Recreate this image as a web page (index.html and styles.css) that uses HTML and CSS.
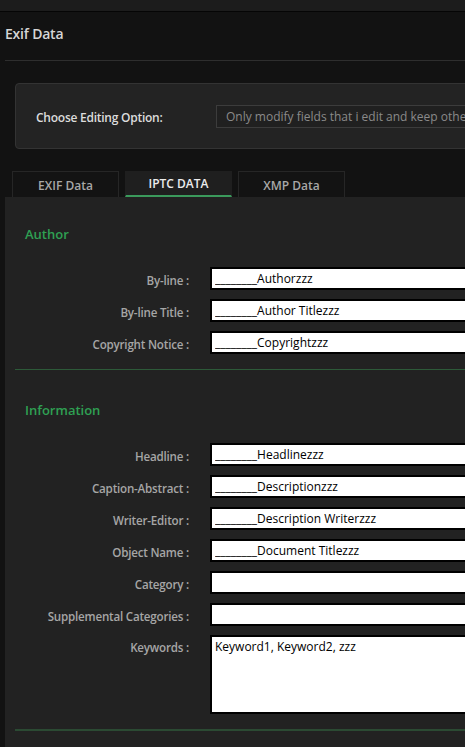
FILE: index.html
```html
<!DOCTYPE html>
<html lang="en">
<head>
    <meta charset="UTF-8">
    <meta name="viewport" content="width=device-width, initial-scale=1.0">
    <title>Exif Data</title>
    <link rel="stylesheet" href="styles.css">
</head>
<body>
    <div class="topbar"></div>

    <div class="page">
        <h1 class="page-title">Exif Data</h1>
        <div class="rule"></div>

        <div class="options-card">
            <span class="options-label">Choose Editing Option:</span>
            <div class="options-select">Only modify fields that i edit and keep other fields unchanged</div>
        </div>

        <div class="tabs">
            <div class="tab">EXIF Data</div>
            <div class="tab active">IPTC DATA</div>
            <div class="tab">XMP Data</div>
        </div>

        <div class="panel">
            <div class="section">
                <h2 class="section-title">Author</h2>
                <div class="form-grid">
                    <label for="byline">By-line :</label>
                    <input type="text" id="byline" value="________Authorzzz">

                    <label for="bylineTitle">By-line Title :</label>
                    <input type="text" id="bylineTitle" value="________Author Titlezzz">

                    <label for="copyright">Copyright Notice :</label>
                    <input type="text" id="copyright" value="________Copyrightzzz">
                </div>
            </div>

            <div class="section">
                <h2 class="section-title">Information</h2>
                <div class="form-grid">
                    <label for="headline">Headline :</label>
                    <input type="text" id="headline" value="________Headlinezzz">

                    <label for="caption">Caption-Abstract :</label>
                    <input type="text" id="caption" value="________Descriptionzzz">

                    <label for="writer">Writer-Editor :</label>
                    <input type="text" id="writer" value="________Description Writerzzz">

                    <label for="objectName">Object Name :</label>
                    <input type="text" id="objectName" value="________Document Titlezzz">

                    <label for="category">Category :</label>
                    <input type="text" id="category" value="">

                    <label for="suppCategories">Supplemental Categories :</label>
                    <input type="text" id="suppCategories" value="">

                    <label for="keywords" class="top">Keywords :</label>
                    <textarea id="keywords">Keyword1, Keyword2, zzz</textarea>
                </div>
            </div>
        </div>
    </div>
</body>
</html>
```

FILE: styles.css
```css
* {
    margin: 0;
    padding: 0;
    box-sizing: border-box;
}

body {
    font-family: 'Open Sans', 'Noto Sans', sans-serif;
    background: #121212;
    width: 465px;
    height: 747px;
    overflow: hidden;
}

.topbar {
    height: 12px;
    background: #1c1c1c;
    border-bottom: 1px solid #050505;
}

.page {
    padding-left: 5px;
    width: 760px;
}

.page-title {
    font-size: 14px;
    font-weight: 600;
    color: #d6d6d6;
    line-height: 20px;
    margin-top: 12px;
    letter-spacing: -0.2px;
}

.rule {
    height: 1px;
    background: #2e2e2e;
    margin-top: 16px;
}

.options-card {
    display: flex;
    align-items: center;
    margin: 22px 0 0 10px;
    height: 66px;
    background: #232323;
    border: 1px solid #333;
    border-radius: 4px;
    padding-left: 20px;
}

.options-label {
    font-size: 12px;
    font-weight: 600;
    color: #dcdcdc;
    width: 180px;
    letter-spacing: -0.25px;
    padding-top: 2px;
}

.options-select {
    height: 23px;
    width: 500px;
    border: 1px solid #3c3c3c;
    background: #202020;
    color: #8a8a8a;
    font-size: 12px;
    line-height: 21px;
    padding-left: 9px;
    white-space: nowrap;
    overflow: hidden;
}

.tabs {
    display: flex;
    gap: 6px;
    margin: 22px 0 0 7px;
}

.tab {
    width: 107px;
    height: 26px;
    border: 1px solid #262626;
    border-bottom: none;
    background: #131313;
    color: #a8a8a8;
    font-size: 12px;
    font-weight: 600;
    text-align: center;
    line-height: 28px;
}

.tab.active {
    background: #1f1f1f;
    border-color: #1f1f1f;
    color: #ececec;
    line-height: 24px;
    border-bottom: 2px solid #3b9a5c;
}

.panel {
    background: #222;
    padding: 0 0 20px 10px;
    min-height: 560px;
}

.section {
    border-bottom: 1px solid #2d5a39;
    padding-bottom: 15px;
}

.section + .section {
    border-bottom: 2px solid #2b4a33;
}

.section-title {
    font-size: 13px;
    font-weight: 600;
    color: #2fa053;
    padding: 28px 0 0 10px;
    line-height: 18px;
}

.form-grid {
    display: grid;
    grid-template-columns: 174px 300px;
    column-gap: 21px;
    row-gap: 9px;
    align-items: center;
    margin-top: 24px;
}

.section + .section .section-title {
    padding-top: 31px;
}

label {
    text-align: right;
    font-size: 11.6px;
    font-weight: 600;
    color: #a6a6a6;
    padding-top: 4px;
    letter-spacing: -0.2px;
}

label.top {
    align-self: start;
    padding-top: 5px;
}

input, textarea {
    height: 23px;
    border: 2px solid #000;
    background: #fff;
    color: #000;
    font-family: 'Open Sans', 'Noto Sans', sans-serif;
    font-size: 12px;
    padding: 0 3px;
    outline: none;
}

textarea {
    height: 79px;
    resize: none;
    padding-top: 2px;
    line-height: 16px;
}
```
